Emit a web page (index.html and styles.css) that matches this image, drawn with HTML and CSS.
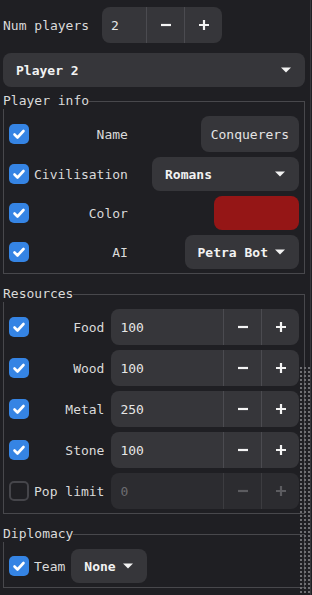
FILE: index.html
```html
<!DOCTYPE html>
<html>
<head>
    <meta charset="UTF-8">
    <title>Player setup</title>
    <link rel="stylesheet" href="styles.css">
</head>
<body>
<div class="panel">
    <div class="top-row">
        <span class="top-label">Num players</span>
        <div class="spin spin-small">
            <span class="val">2</span>
            <span class="btn"><svg width="12" height="12" viewBox="0 0 12 12"><path d="M1 6h10" stroke="currentColor" stroke-width="2.2"/></svg></span>
            <span class="btn"><svg width="12" height="12" viewBox="0 0 12 12"><path d="M1 6h10M6 1v10" stroke="currentColor" stroke-width="2.2"/></svg></span>
        </div>
    </div>

    <div class="combo combo-player">
        <span class="txt">Player 2</span>
        <svg class="arrow" width="10" height="6" viewBox="0 0 10 6"><path d="M0 0.5h10L5 5.5z" fill="currentColor"/></svg>
    </div>

    <div class="group">
        <div class="group-head"><span>Player info</span></div>
        <div class="group-body">
            <div class="form-grid info">
                <span class="cb"><svg width="20" height="20" viewBox="0 0 20 20"><path d="M5.5 10.5l3 3L14.5 7" fill="none" stroke="#fff" stroke-width="2.6" stroke-linecap="round" stroke-linejoin="round"/></svg></span>
                <span class="lbl">Name</span>
                <div class="field">Conquerers</div>

                <span class="cb"><svg width="20" height="20" viewBox="0 0 20 20"><path d="M5.5 10.5l3 3L14.5 7" fill="none" stroke="#fff" stroke-width="2.6" stroke-linecap="round" stroke-linejoin="round"/></svg></span>
                <span class="lbl">Civilisation</span>
                <div class="combo combo-civ">
                    <span class="txt">Romans</span>
                    <svg class="arrow" width="10" height="6" viewBox="0 0 10 6"><path d="M0 0.5h10L5 5.5z" fill="currentColor"/></svg>
                </div>

                <span class="cb"><svg width="20" height="20" viewBox="0 0 20 20"><path d="M5.5 10.5l3 3L14.5 7" fill="none" stroke="#fff" stroke-width="2.6" stroke-linecap="round" stroke-linejoin="round"/></svg></span>
                <span class="lbl">Color</span>
                <div class="swatch"></div>

                <span class="cb"><svg width="20" height="20" viewBox="0 0 20 20"><path d="M5.5 10.5l3 3L14.5 7" fill="none" stroke="#fff" stroke-width="2.6" stroke-linecap="round" stroke-linejoin="round"/></svg></span>
                <span class="lbl">AI</span>
                <div class="combo">
                    <span class="txt">Petra Bot</span>
                    <svg class="arrow" width="10" height="6" viewBox="0 0 10 6"><path d="M0 0.5h10L5 5.5z" fill="currentColor"/></svg>
                </div>
            </div>
        </div>
    </div>

    <div class="group">
        <div class="group-head"><span>Resources</span></div>
        <div class="group-body">
            <div class="form-grid res">
                <span class="cb"><svg width="20" height="20" viewBox="0 0 20 20"><path d="M5.5 10.5l3 3L14.5 7" fill="none" stroke="#fff" stroke-width="2.6" stroke-linecap="round" stroke-linejoin="round"/></svg></span>
                <span class="lbl">Food</span>
                <div class="spin">
                    <span class="val">100</span>
                    <span class="btn"><svg width="12" height="12" viewBox="0 0 12 12"><path d="M1 6h10" stroke="currentColor" stroke-width="2.2"/></svg></span>
                    <span class="btn"><svg width="12" height="12" viewBox="0 0 12 12"><path d="M1 6h10M6 1v10" stroke="currentColor" stroke-width="2.2"/></svg></span>
                </div>

                <span class="cb"><svg width="20" height="20" viewBox="0 0 20 20"><path d="M5.5 10.5l3 3L14.5 7" fill="none" stroke="#fff" stroke-width="2.6" stroke-linecap="round" stroke-linejoin="round"/></svg></span>
                <span class="lbl">Wood</span>
                <div class="spin">
                    <span class="val">100</span>
                    <span class="btn"><svg width="12" height="12" viewBox="0 0 12 12"><path d="M1 6h10" stroke="currentColor" stroke-width="2.2"/></svg></span>
                    <span class="btn"><svg width="12" height="12" viewBox="0 0 12 12"><path d="M1 6h10M6 1v10" stroke="currentColor" stroke-width="2.2"/></svg></span>
                </div>

                <span class="cb"><svg width="20" height="20" viewBox="0 0 20 20"><path d="M5.5 10.5l3 3L14.5 7" fill="none" stroke="#fff" stroke-width="2.6" stroke-linecap="round" stroke-linejoin="round"/></svg></span>
                <span class="lbl">Metal</span>
                <div class="spin">
                    <span class="val">250</span>
                    <span class="btn"><svg width="12" height="12" viewBox="0 0 12 12"><path d="M1 6h10" stroke="currentColor" stroke-width="2.2"/></svg></span>
                    <span class="btn"><svg width="12" height="12" viewBox="0 0 12 12"><path d="M1 6h10M6 1v10" stroke="currentColor" stroke-width="2.2"/></svg></span>
                </div>

                <span class="cb"><svg width="20" height="20" viewBox="0 0 20 20"><path d="M5.5 10.5l3 3L14.5 7" fill="none" stroke="#fff" stroke-width="2.6" stroke-linecap="round" stroke-linejoin="round"/></svg></span>
                <span class="lbl">Stone</span>
                <div class="spin">
                    <span class="val">100</span>
                    <span class="btn"><svg width="12" height="12" viewBox="0 0 12 12"><path d="M1 6h10" stroke="currentColor" stroke-width="2.2"/></svg></span>
                    <span class="btn"><svg width="12" height="12" viewBox="0 0 12 12"><path d="M1 6h10M6 1v10" stroke="currentColor" stroke-width="2.2"/></svg></span>
                </div>

                <span class="cb cb-off"></span>
                <span class="lbl">Pop limit</span>
                <div class="spin spin-off">
                    <span class="val">0</span>
                    <span class="btn"><svg width="12" height="12" viewBox="0 0 12 12"><path d="M1 6h10" stroke="currentColor" stroke-width="2.2"/></svg></span>
                    <span class="btn"><svg width="12" height="12" viewBox="0 0 12 12"><path d="M1 6h10M6 1v10" stroke="currentColor" stroke-width="2.2"/></svg></span>
                </div>
            </div>
        </div>
    </div>

    <div class="group">
        <div class="group-head"><span>Diplomacy</span></div>
        <div class="group-body">
            <div class="team-row">
                <span class="cb"><svg width="20" height="20" viewBox="0 0 20 20"><path d="M5.5 10.5l3 3L14.5 7" fill="none" stroke="#fff" stroke-width="2.6" stroke-linecap="round" stroke-linejoin="round"/></svg></span>
                <span class="team-lbl">Team</span>
                <div class="combo">
                    <span class="txt">None</span>
                    <svg class="arrow" width="10" height="6" viewBox="0 0 10 6"><path d="M0 0.5h10L5 5.5z" fill="currentColor"/></svg>
                </div>
            </div>
        </div>
    </div>

    <div class="dots"></div>
</div>
</body>
</html>
```

FILE: styles.css
```css
html, body {
    margin: 0;
    padding: 0;
    background: #1f1f23;
}

body {
    font-family: "DejaVu Sans Mono", "Liberation Mono", monospace;
    font-size: 13px;
    color: #dadada;
}

.panel {
    position: relative;
    box-sizing: border-box;
    width: 311px;
    min-height: 100vh;
    padding: 7px 5px 0 3px;
    border-right: 1px solid #38383c;
}

.top-row {
    display: flex;
    align-items: center;
    height: 36px;
}

.top-label {
    width: 99px;
}

/* spin boxes */
.spin {
    display: flex;
    height: 36px;
    background: #36363a;
    border-radius: 8px;
    color: #e6e6e6;
}

.spin-small {
    width: 120px;
}

.spin .val {
    flex: 1;
    display: flex;
    align-items: center;
    padding-left: 9px;
}

.spin .btn {
    width: 37px;
    border-left: 1px solid #4b4b50;
    display: flex;
    align-items: center;
    justify-content: center;
    color: #f4f4f4;
}

.spin-off {
    background: #2c2c30;
    color: #6c6c70;
}

.spin-off .btn {
    color: #5c5c60;
    border-left-color: #3c3c40;
}

/* combos */
.combo {
    display: flex;
    align-items: center;
    gap: 7px;
    box-sizing: border-box;
    height: 34px;
    padding: 0 14px 0 13px;
    background: #36363a;
    border-radius: 8px;
    font-weight: bold;
    color: #f2f2f2;
}

.combo .txt {
    flex: 1;
}

.combo-player {
    margin-top: 10px;
}

.combo-civ {
    width: 147px;
}

.field {
    display: flex;
    align-items: center;
    height: 36px;
    padding: 0 10px;
    background: #36363a;
    border-radius: 8px;
    color: #e4e4e4;
}

.swatch {
    width: 85px;
    height: 34px;
    background: #951616;
    border-radius: 8px;
}

/* group boxes */
.group {
    margin-top: 12px;
}

.combo-player + .group {
    margin-top: 6px;
}

.group-head {
    display: flex;
    height: 16px;
    line-height: 16px;
}

.group-head::after {
    content: "";
    flex: 1;
    margin-top: 8px;
    border-top: 1px solid #48484c;
    border-right: 1px solid #48484c;
}

.group-body {
    border: 1px solid #48484c;
    border-top: none;
    padding: 7px 5px 4px 5px;
}

.form-grid {
    display: grid;
    grid-template-columns: 20px auto 1fr;
    column-gap: 5px;
    row-gap: 5px;
    align-items: center;
}

.lbl {
    text-align: right;
}

.info .field,
.info .combo,
.info .swatch {
    justify-self: end;
}

.res .lbl {
    padding-right: 2px;
}

/* checkboxes */
.cb {
    display: flex;
    width: 20px;
    height: 20px;
    border-radius: 5px;
    background: #3584e4;
}

.cb-off {
    box-sizing: border-box;
    background: transparent;
    border: 2px solid #45454a;
}

.team-row {
    display: flex;
    align-items: center;
}

.team-lbl {
    margin: 0 6px 0 5px;
}

.dots {
    position: absolute;
    left: 299px;
    top: 366px;
    width: 11px;
    height: 229px;
    background-image: radial-gradient(circle, #6e6e72 0.8px, transparent 1px);
    background-size: 4px 4px;
}
```
